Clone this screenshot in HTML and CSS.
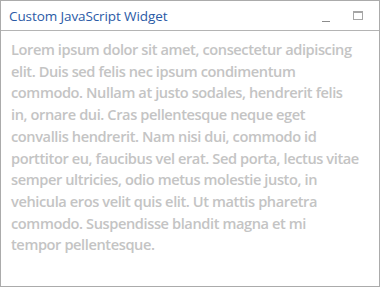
FILE: index.html
```html
<!DOCTYPE html>
<html lang="en">
<head>
	<meta charset="UTF-8">
	<title>Custom JavaScript Widget</title>
	<link rel="stylesheet" href="styles.css">
</head>
<body>
	<section class="widget">
		<header class="bar">
			<h1>Custom JavaScript Widget</h1>
			<div class="tools">
				<span class="min"></span>
				<span class="max"></span>
			</div>
		</header>
		<div class="content">
			<p>Lorem ipsum dolor sit amet, consectetur adipiscing<br>
			elit. Duis sed felis nec ipsum condimentum<br>
			commodo. Nullam at justo sodales, hendrerit felis<br>
			in, ornare dui. Cras pellentesque neque eget<br>
			convallis hendrerit. Nam nisi dui, commodo id<br>
			porttitor eu, faucibus vel erat. Sed porta, lectus vitae<br>
			semper ultricies, odio metus molestie justo, in<br>
			vehicula eros velit quis elit. Ut mattis pharetra<br>
			commodo. Suspendisse blandit magna et mi<br>
			tempor pellentesque.</p>
		</div>
	</section>
</body>
</html>
```

FILE: styles.css
```css
*{
	margin: 0;
	padding: 0;
	box-sizing: border-box;
}
body{
	font-family: 'Open Sans', 'Noto Sans', sans-serif;
	background-color: #fff;
}
.widget{
	width: 380px;
	height: 287px;
	border: 1px solid #ababab;
	background-color: #fff;
	display: flex;
	flex-direction: column;
}
.bar{
	height: 30px;
	border-bottom: 1px solid #b4b4b4;
	display: flex;
	align-items: center;
	padding: 0 16px 0 8px;
}
.bar h1{
	flex: 1;
	font-size: 13.5px;
	font-weight: 400;
	color: #2b5aa6;
	letter-spacing: -0.1px;
}
.tools{
	display: flex;
	align-items: center;
	gap: 23px;
}
.min{
	width: 8px;
	height: 1px;
	background-color: #8c8c8c;
	margin-top: 11px;
}
.max{
	width: 10px;
	height: 9px;
	border: 1px solid #a6a6a6;
	border-top-width: 2px;
	margin-top: -1px;
}
.content{
	padding: 8px 0 0 10px;
	overflow: hidden;
}
.content p{
	font-size: 14.6px;
	font-weight: 600;
	line-height: 21.7px;
	color: #c4c4c4;
	letter-spacing: -0.4px;
	white-space: nowrap;
}
```
